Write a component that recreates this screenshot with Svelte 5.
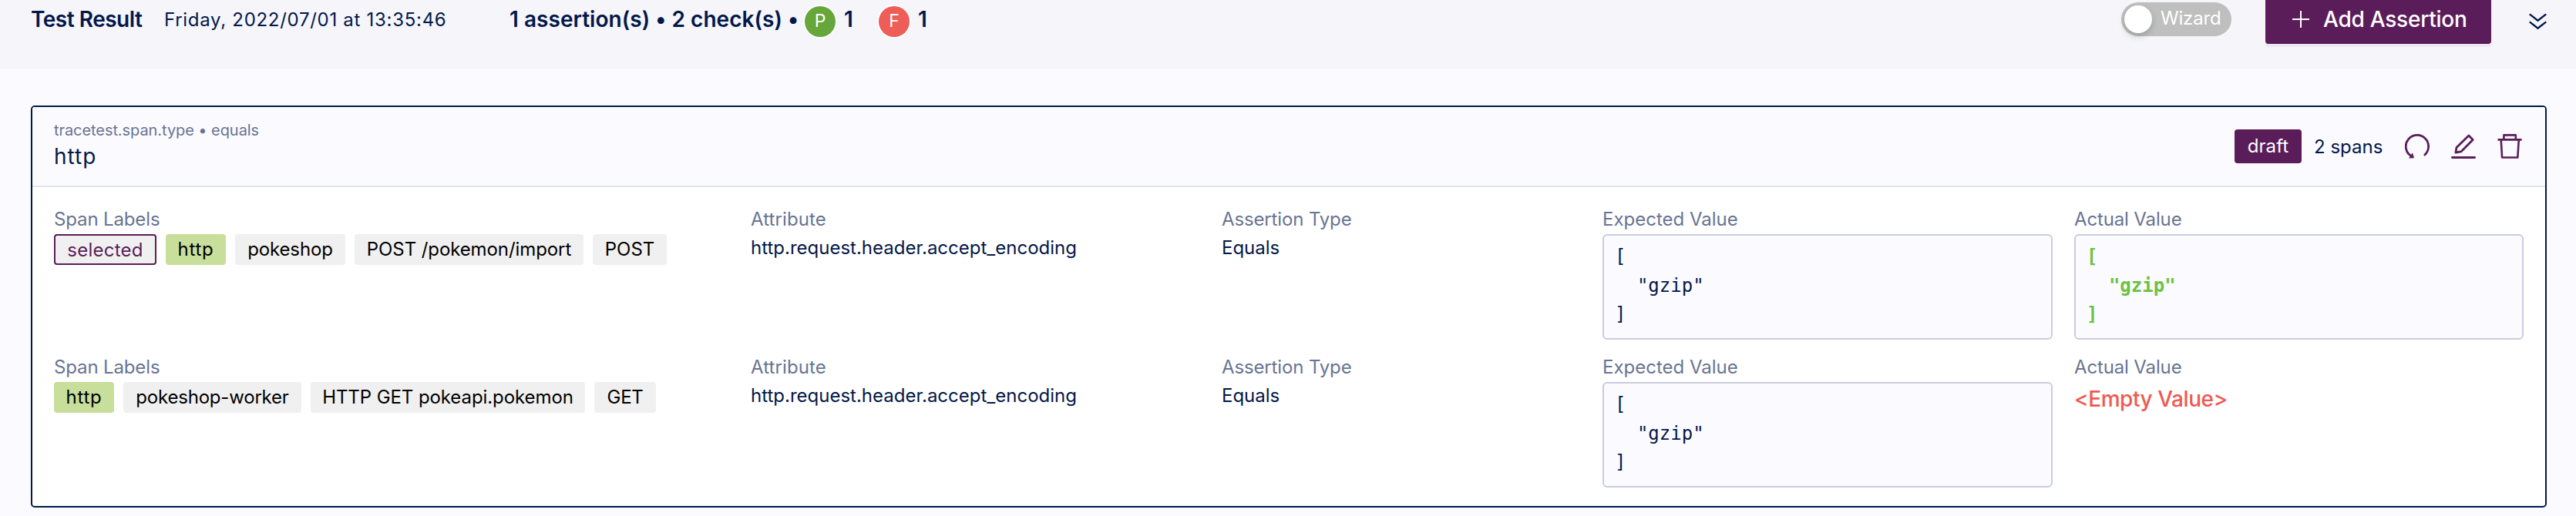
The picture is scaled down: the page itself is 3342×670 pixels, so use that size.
<script>
  // Each tag: text, kind, width, letter spacing
  const rows = [
    {
      tags: [
        ['selected', 'sel', 133, 0.26],
        ['http', 'type', 78, 0.8],
        ['pokeshop', '', 143, -0.14],
        ['POST /pokemon/import', '', 297, -0.09],
        ['POST', '', 96, 0]
      ],
      pass: true
    },
    {
      tags: [
        ['http', 'type', 78, 0.8],
        ['pokeshop-worker', '', 231, -0.2],
        ['HTTP GET pokeapi.pokemon', '', 356, -0.08],
        ['GET', '', 80, -0.3]
      ],
      pass: false
    }
  ];
  const json = '[\n  "gzip"\n]';
</script>

<header class="bar">
  <span class="title">Test Result</span>
  <span class="date">Friday, 2022/07/01 at 13:35:46</span>
  <span class="summary">1 assertion(s) • 2 check(s) •</span>
  <span class="dot pass">P</span>
  <span class="count">1</span>
  <span class="dot fail">F</span>
  <span class="count">1</span>
  <div class="toggle"><i class="knob"></i><span>Wizard</span></div>
  <button class="add">
    <svg width="22" height="22" viewBox="0 0 22 22" stroke="#fff" stroke-width="2"><path d="M11 0V22M0 11H22" /></svg>
    <span>Add Assertion</span>
  </button>
  <svg class="down" width="23" height="22" viewBox="0 0 23 22" fill="none" stroke="#031849" stroke-width="2.4"><path d="M.8 1.4 11.5 9.8 22.2 1.4M.8 11.4 11.5 19.8 22.2 11.4" /></svg>
</header>

<section class="card">
  <div class="head">
    <div class="names">
      <div class="selector">tracetest.span.type • equals</div>
      <div class="name">http</div>
    </div>
    <span class="draft">draft</span>
    <span class="spans">2 spans</span>
    <div class="icons">
      <svg width="32" height="32" viewBox="0 0 32 32" fill="none" stroke="#5b1d5a" stroke-width="2.8"><path d="M25.8 27A14.7 14.7 0 1 0 7.6 28.2" stroke-linecap="round" /><path d="M5 31.4 10 24.2 12 31.2Z" fill="#5b1d5a" stroke="none" /></svg>
      <svg width="32" height="32" viewBox="0 0 32 32" fill="none" stroke="#5b1d5a" stroke-width="2.8"><path d="M1.4 30.5H30.6" stroke-linecap="round" /><path d="M22.9 2 28.2 7.4 12.8 22.9 5.9 24 7 17.6Z" stroke-linejoin="round" /></svg>
      <svg width="32" height="32" viewBox="0 0 32 32" fill="none" stroke="#5b1d5a" stroke-width="2.6" stroke-linejoin="round"><path d="M.5 7.4H31.6M8.4 7.4V1.4H23.8V7.4M4.7 7.4 6.1 30.5H26.3L27.8 7.4" /></svg>
    </div>
  </div>
  <div class="body">
    {#each rows as row}
      <div class="row">
        <div class="cell">
          <div class="label">Span Labels</div>
          <div class="tags">
            {#each row.tags as [text, kind, width, spacing]}
              <span class="tag {kind}" style="width: {width}px; letter-spacing: {spacing}px">{text}</span>
            {/each}
          </div>
        </div>
        <div class="cell">
          <div class="label attr">Attribute</div>
          <div class="value">http.request.header.accept_encoding</div>
        </div>
        <div class="cell">
          <div class="label">Assertion Type</div>
          <div class="value">Equals</div>
        </div>
        <div class="cell">
          <div class="label expected">Expected Value</div>
          <pre class="code">{json}</pre>
        </div>
        <div class="cell">
          <div class="label">Actual Value</div>
          {#if row.pass}
            <pre class="code ok">{json}</pre>
          {:else}
            <div class="empty">&lt;Empty Value&gt;</div>
          {/if}
        </div>
      </div>
    {/each}
  </div>
</section>

<style>
  :global(body) { background: #fbfbff; overflow: hidden; }
  :global(#app) { font-family: Inter, "Liberation Sans", sans-serif; color: #031849; font-size: 24px; height: 670px; overflow: hidden; white-space: nowrap; }
  .bar { box-sizing: border-box; height: 89px; background: #f5f5fa; padding-left: 40px; display: flex; align-items: flex-start; line-height: 50px; }
  .title { width: 173px; font-size: 28px; font-weight: 600; letter-spacing: -0.49px; }
  .date { width: 448px; line-height: 52px; letter-spacing: 0.71px; }
  .summary { width: 383px; font-size: 28px; font-weight: 600; letter-spacing: 0.04px; }
  .dot { width: 40px; height: 40px; margin-top: 8px; border-radius: 50%; box-shadow: 0 0 0 2px #fff; color: #fff; text-align: center; font-size: 23px; line-height: 39px; }
  .pass { background: #66a63a; }
  .fail { background: #ee5d57; }
  .count { width: 45px; margin-left: 11px; font-size: 28px; font-weight: 600; }
  .toggle { box-sizing: border-box; width: 143px; height: 44px; margin: 3px 44px 0 auto; border-radius: 22px; background: #bfbfbf; color: #fff; display: flex; align-items: center; padding-left: 4px; line-height: 42px; letter-spacing: -0.17px; }
  .toggle span { margin-top: -2px; }
  .knob { width: 36px; height: 36px; margin-right: 11px; border-radius: 50%; background: #fff; box-shadow: 0 4px 8px rgba(0, 35, 11, 0.2); }
  .add { box-sizing: border-box; width: 293px; height: 57px; margin: 0 49px 0 0; padding: 0 0 0 35px; border: 0; border-radius: 0 0 4px 4px; background: #5b1d5a; color: #fff; box-shadow: 0 4px 0 rgba(91, 29, 90, 0.05); font: 500 28px/50px Inter, sans-serif; letter-spacing: -0.24px; display: flex; align-items: flex-start; }
  .add svg { margin: 14px 18px 0 0; }
  .down { margin: 17px 38px 0 0; }
  .card { box-sizing: border-box; width: 3264px; height: 522px; margin: 48px 0 0 40px; border: 2px solid #031849; border-radius: 5px; overflow: hidden; background: #fff; }
  .head { height: 102px; background: #fbfbff; border-bottom: 2px solid #e2e4ee; display: flex; align-items: center; padding: 0 30px 0 28px; }
  .names { flex: 1; align-self: flex-start; padding-top: 15px; }
  .selector { font-size: 20px; line-height: 31px; letter-spacing: -0.07px; color: #687492; }
  .name { font-size: 28px; line-height: 36px; letter-spacing: 1px; }
  .draft { width: 87px; height: 44px; border-radius: 4px; background: #5b1d5a; color: #fff; text-align: center; line-height: 43px; letter-spacing: 0.1px; }
  .spans { width: 118px; margin-left: 16px; line-height: 43px; }
  .icons { display: flex; gap: 28px; }
  .body { padding: 23px 28px 0; }
  .row { height: 192px; display: grid; grid-template-columns: 904px 611px 494px 612px 583px; }
  .label { line-height: 38px; letter-spacing: -0.14px; color: #687492; }
  .attr { letter-spacing: 0.1px; }
  .expected { letter-spacing: 0; }
  .tags { display: flex; gap: 12px; }
  .tag { box-sizing: border-box; height: 40px; border-radius: 4px; background: #f0f0f0; color: #000; line-height: 39px; text-align: center; }
  .type { background: #c8df9b; }
  .sel { border: 2px solid #5b1d5a; color: #5b1d5a; line-height: 38px; }
  .value { line-height: 36px; }
  .code { box-sizing: border-box; width: 584px; height: 137px; margin: 0; padding: 9px 14px 0; border: 2px solid #c9ccdc; border-radius: 6px; background: #fbfbff; font: 24px/37.7px "DejaVu Sans Mono", monospace; }
  .ok { width: 583px; color: #6cc23e; font-weight: 700; }
  .empty { font-size: 28px; font-weight: 500; line-height: 44px; letter-spacing: -0.46px; color: #ee5a52; }
</style>
